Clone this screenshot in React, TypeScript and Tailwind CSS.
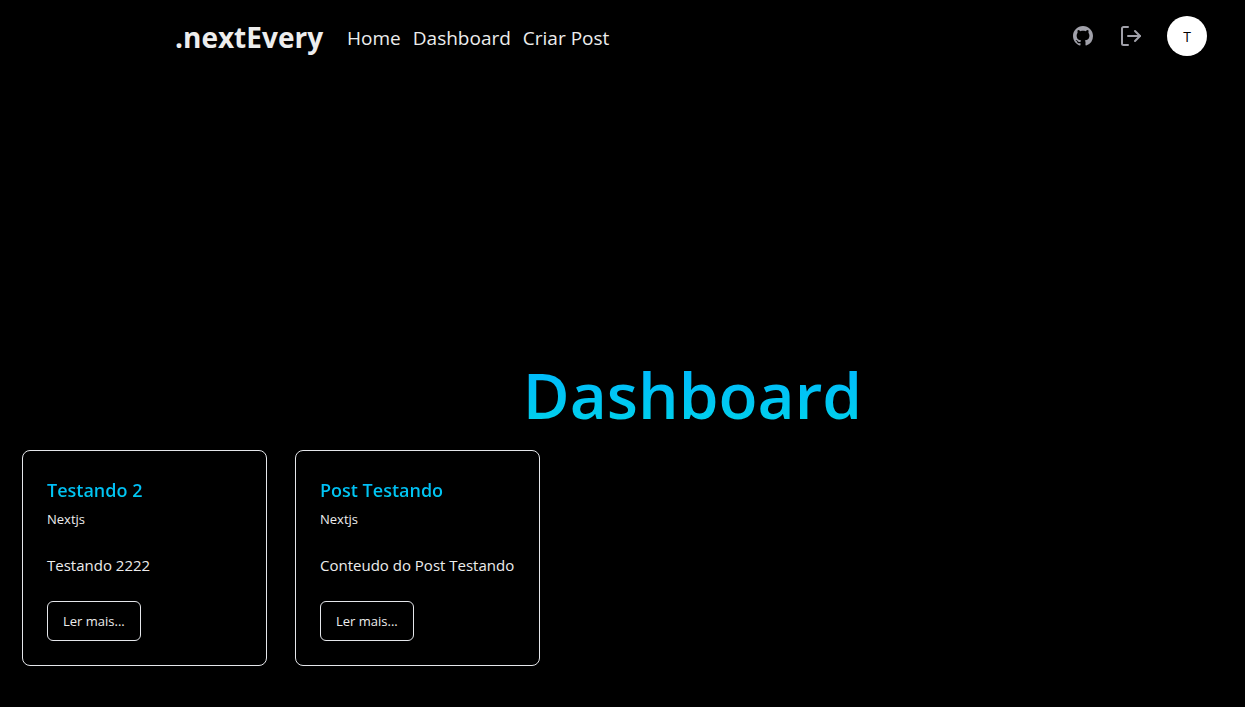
import { BsGithub } from "react-icons/bs";

type Post = { title: string; category: string; content: string };

const posts: Post[] = [
  { title: "Testando 2", category: "Nextjs", content: "Testando 2222" },
  { title: "Post Testando", category: "Nextjs", content: "Conteudo do Post Testando" },
];

const links = ["Home", "Dashboard", "Criar Post"];

function LogOutIcon() {
  return (
    <svg
      width="24"
      height="24"
      viewBox="0 0 24 24"
      fill="none"
      stroke="currentColor"
      strokeWidth="2"
      strokeLinecap="round"
      strokeLinejoin="round"
      aria-hidden="true"
    >
      <path d="M9 21H4.5A1.5 1.5 0 0 1 3 19.5v-15A1.5 1.5 0 0 1 4.500 3H9" />
      <path d="m16 17 5-5-5-5" />
      <path d="M21 12H9" />
    </svg>
  );
}

function Header() {
  return (
    <header className="flex h-18 items-center justify-between pr-[38px] pl-[175px]">
      <div className="flex items-center gap-6 pt-0.5">
        <a href="#" className="text-[28px] leading-9 font-bold">
          .nextEvery
        </a>
        <nav className="flex gap-3 pt-0.5 text-[19px] leading-7">
          {links.map((link) => (
            <a key={link} href="#">
              {link}
            </a>
          ))}
        </nav>
      </div>
      <div className="flex items-center gap-6 text-[#a1a1aa]">
        <a href="#" aria-label="GitHub" className="p-0.5">
          <BsGithub size={20} />
        </a>
        <button type="button" aria-label="Sair">
          <LogOutIcon />
        </button>
        <span className="flex size-10 items-center justify-center rounded-full bg-white pt-0.5 text-sm text-black">
          T
        </span>
      </div>
    </header>
  );
}

function PostCard({ post }: { post: Post }) {
  return (
    <article className="rounded-lg border border-[#e5e7eb] p-6">
      <h2 className="bg-linear-to-b from-[#00b8ff] to-[#00ceea] bg-clip-text text-lg leading-[30px] font-semibold text-transparent">
        {post.title}
      </h2>
      <p className="mt-0.5 text-[13px] leading-6">{post.category}</p>
      <p className="mt-[22px] text-[15px] leading-6">{post.content}</p>
      <button
        type="button"
        className="mt-6 h-10 rounded-md border border-[#e5e7eb] px-[15px] pt-0.5 text-[13px]"
      >
        Ler mais...
      </button>
    </article>
  );
}

export default function App() {
  return (
    <div className="min-h-screen bg-black font-['Open_Sans','Noto_Sans',sans-serif] text-[#ededed]">
      <Header />
      <main className="px-[22px] pt-[284px] pb-10">
        <h1 className="bg-linear-to-b from-[#00b4ff] to-[#00d4e8] bg-clip-text pl-[140px] text-center text-[64px] leading-[78px] font-semibold text-transparent">
          Dashboard
        </h1>
        <section className="mt-4 grid grid-cols-[repeat(auto-fill,245px)] gap-7">
          {posts.map((post) => (
            <PostCard key={post.title} post={post} />
          ))}
        </section>
      </main>
    </div>
  );
}
